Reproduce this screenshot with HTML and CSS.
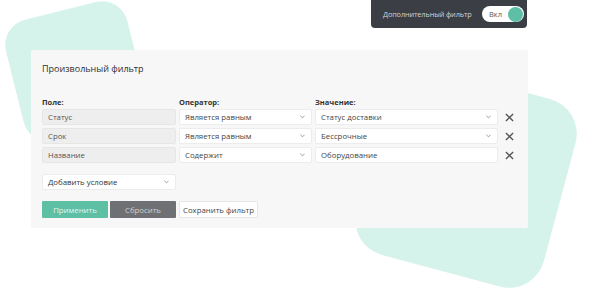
FILE: index.html
```html
<!DOCTYPE html>
<html lang="ru">
<head>
    <meta charset="UTF-8">
    <title>Произвольный фильтр</title>
    <link rel="stylesheet" href="styles.css">
</head>
<body>
    <div class="scene">
        <div class="blob blob-left"></div>
        <div class="blob blob-right"></div>

        <div class="page">
            <div class="topbar">
                <div class="extra-filter">
                    <span class="extra-label">Дополнительный фильтр</span>
                    <div class="switch">
                        <span class="switch-text">Вкл</span>
                        <span class="switch-knob"></span>
                    </div>
                </div>
            </div>

            <div class="card">
                <p class="card-title">Произвольный фильтр</p>

                <div class="conditions">
                    <span class="col-label">Поле:</span>
                    <span class="col-label">Оператор:</span>
                    <span class="col-label">Значение:</span>
                    <span></span>

                    <div class="field readonly">Статус</div>
                    <div class="field select">Является равным <svg class="chevron" viewBox="0 0 6 4"><polyline points="0.5,0.5 3,3 5.5,0.5"/></svg></div>
                    <div class="field select">Статус доставки <svg class="chevron" viewBox="0 0 6 4"><polyline points="0.5,0.5 3,3 5.5,0.5"/></svg></div>
                    <svg class="remove" viewBox="0 0 10 10"><path d="M1 1 L9 9 M9 1 L1 9"/></svg>

                    <div class="field readonly">Срок</div>
                    <div class="field select">Является равным <svg class="chevron" viewBox="0 0 6 4"><polyline points="0.5,0.5 3,3 5.5,0.5"/></svg></div>
                    <div class="field select">Бессрочные <svg class="chevron" viewBox="0 0 6 4"><polyline points="0.5,0.5 3,3 5.5,0.5"/></svg></div>
                    <svg class="remove" viewBox="0 0 10 10"><path d="M1 1 L9 9 M9 1 L1 9"/></svg>

                    <div class="field readonly">Название</div>
                    <div class="field select">Содержит <svg class="chevron" viewBox="0 0 6 4"><polyline points="0.5,0.5 3,3 5.5,0.5"/></svg></div>
                    <div class="field">Оборудование</div>
                    <svg class="remove" viewBox="0 0 10 10"><path d="M1 1 L9 9 M9 1 L1 9"/></svg>
                </div>

                <div class="field select add-condition">Добавить условие <svg class="chevron" viewBox="0 0 6 4"><polyline points="0.5,0.5 3,3 5.5,0.5"/></svg></div>

                <div class="actions">
                    <button class="btn btn-apply">Применить</button>
                    <button class="btn btn-reset">Сбросить</button>
                    <button class="btn btn-save">Сохранить фильтр</button>
                </div>
            </div>
        </div>
    </div>
</body>
</html>
```

FILE: styles.css
```css
* {
    box-sizing: border-box;
    font-family: 'Open Sans', 'Noto Sans', sans-serif;
}

body {
    margin: 0;
    background-color: #ffffff;
    overflow: hidden;
}

.scene {
    position: relative;
    width: 589px;
    height: 298px;
}

/* мятные фигуры на фоне */
.blob {
    position: absolute;
    background-color: #d5f2eb;
}

.blob-left {
    left: 13px;
    top: 9px;
    width: 125px;
    height: 125px;
    border-radius: 26px;
    transform: rotate(-14deg);
}

.blob-right {
    left: 369px;
    top: 80px;
    width: 194px;
    height: 194px;
    border-radius: 36px;
    transform: rotate(15deg);
}

.page {
    position: relative;
    z-index: 1;
    width: 528px;
    padding-left: 31px;
}

.topbar {
    display: flex;
    justify-content: flex-end;
    padding-right: 1px;
}

.extra-filter {
    display: flex;
    align-items: center;
    width: 156px;
    height: 28px;
    padding: 0 3px 0 12px;
    background-color: #3b3e45;
    border-radius: 0 0 4px 4px;
}

.extra-label {
    flex: 1;
    font-size: 7.3px;
    letter-spacing: -0.1px;
    color: #d2d3d5;
    white-space: nowrap;
}

.switch {
    display: flex;
    align-items: center;
    justify-content: space-between;
    width: 42px;
    height: 16px;
    padding: 0 1px 0 7px;
    background-color: #ffffff;
    border-radius: 8px;
}

.switch-text {
    font-size: 7.5px;
    color: #555;
}

.switch-knob {
    width: 15px;
    height: 15px;
    border-radius: 50%;
    background-color: #5dbfa4;
}

.card {
    margin-top: 22px;
    padding: 12px 11px 10px 11px;
    background-color: #f7f7f7;
    border-radius: 2px;
}

.card-title {
    margin: 0;
    font-size: 9px;
    line-height: 14px;
    color: #2e2e2e;
}

.conditions {
    display: grid;
    grid-template-columns: 134px 133px 183px 16px;
    column-gap: 3px;
    row-gap: 3px;
    align-items: center;
    margin-top: 21px;
}

.col-label {
    font-size: 7.5px;
    font-weight: 700;
    color: #333;
    line-height: 11px;
    margin-bottom: -2px;
}

.field {
    display: flex;
    align-items: center;
    height: 16px;
    padding: 0 6px 0 5px;
    background-color: #ffffff;
    border: 1px solid #ececec;
    border-radius: 2px;
    font-size: 7.8px;
    color: #444;
    white-space: nowrap;
}

.field.readonly {
    background-color: #eeeeee;
    border-color: #e6e6e6;
    color: #555;
}

.field.select {
    justify-content: space-between;
}

.chevron {
    width: 5px;
    height: 4px;
    fill: none;
    stroke: #888;
    stroke-width: 1;
}

.remove {
    width: 9px;
    height: 9px;
    margin-left: 4px;
    stroke: #555;
    stroke-width: 1.5;
}

.add-condition {
    width: 134px;
    margin-top: 11px;
    color: #333;
}

.actions {
    display: flex;
    gap: 2px;
    margin-top: 11px;
}

.btn {
    height: 17px;
    padding: 0;
    border: none;
    border-radius: 1px;
    font-size: 7.8px;
    cursor: pointer;
}

.btn-apply {
    width: 66px;
    background-color: #5dbfa4;
    color: #e3f5ef;
}

.btn-reset {
    width: 66px;
    background-color: #6f7073;
    color: #cfd0d2;
}

.btn-save {
    width: 79px;
    margin-left: 1px;
    background-color: #ffffff;
    border: 1px solid #e6e6e6;
    color: #444;
}
```
